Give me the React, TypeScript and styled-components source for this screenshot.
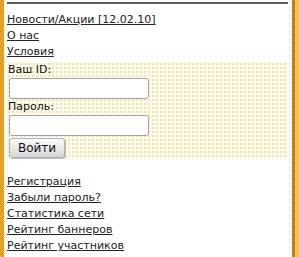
import React from 'react';
import styled, { createGlobalStyle } from 'styled-components';

const GlobalStyle = createGlobalStyle`
  html, body {
    margin: 0;
    padding: 0;
    background: #ffffff;
  }
  body {
    font-family: "DejaVu Sans", Verdana, sans-serif;
    font-size: 11px;
    color: #222;
  }
`;

const Frame = styled.div`
  display: flex;
  width: 299px;
  height: 257px;
  overflow: hidden;
`;

const Rail = styled.div<{ side: 'left' | 'right' }>`
  flex: none;
  width: ${({ side }) => (side === 'left' ? '4px' : '7px')};
  background-color: ${({ side }) => (side === 'left' ? '#f2a52a' : '#f6b93a')};
  background-image: ${({ side }) =>
    side === 'left'
      ? 'repeating-conic-gradient(#d48a14 0 25%, #f7b43c 0 50%)'
      : 'linear-gradient(90deg, transparent 0 3px, #f8c24a 3px), repeating-conic-gradient(#a8650c 0 25%, #e39a24 0 50%)'};
  background-size: ${({ side }) => (side === 'left' ? '2px 2px' : '100% 100%, 2px 2px')};
`;

const Content = styled.div`
  flex: 1;
  padding: 2px 4px 0 3px;
`;

const TopRule = styled.div`
  height: 2px;
  background: #5e5e5e;
`;

const LinkList = styled.div<{ top: number }>`
  display: flex;
  flex-direction: column;
  align-items: flex-start;
  padding-top: ${({ top }) => top}px;
  line-height: 16.2px;
`;

const NavLink = styled.a`
  color: #222;
  text-decoration: underline;
  white-space: nowrap;
`;

const LoginPanel = styled.form`
  margin: 1px 0 0;
  padding: 0 0 1px 1px;
  background-color: #fffdea;
  background-image: radial-gradient(circle, #e3d9a4 0.65px, transparent 0.85px);
  background-size: 4px 4px;
  display: flex;
  flex-direction: column;
  align-items: flex-start;
`;

const Label = styled.label`
  display: block;
  line-height: 16px;
  color: #111;
`;

const Field = styled.input`
  box-sizing: border-box;
  width: 140px;
  height: 21px;
  margin: 0 0 0 1px;
  border: 1px solid #a3a3a3;
  border-radius: 3px;
  background: #ffffff;
  font: inherit;
  padding: 0 3px;
  outline: none;
`;

const Button = styled.button`
  box-sizing: border-box;
  width: 56px;
  height: 20px;
  margin: 2px 0 0 1px;
  padding: 0;
  border: 1px solid #b0b0b0;
  border-radius: 3px;
  background: linear-gradient(#fbfbfb, #e6e6e6 60%, #d4d4d4);
  box-shadow: 1px 1px 0 #bdbdbd;
  font-family: "DejaVu Sans", Verdana, sans-serif;
  font-size: 12px;
  color: #111;
`;

export default function App() {
  const topLinks = ['Новости/Акции [12.02.10]', 'О нас', 'Условия'];
  const bottomLinks = [
    'Регистрация',
    'Забыли пароль?',
    'Статистика сети',
    'Рейтинг баннеров',
    'Рейтинг участников',
  ];

  return (
    <>
      <GlobalStyle />
      <Frame>
        <Rail side="left" />
        <Content>
          <TopRule />
          <LinkList top={8}>
            {topLinks.map((t) => (
              <NavLink key={t} href="#">{t}</NavLink>
            ))}
          </LinkList>
          <LoginPanel onSubmit={(e) => e.preventDefault()}>
            <Label>Ваш ID:</Label>
            <Field type="text" />
            <Label>Пароль:</Label>
            <Field type="password" />
            <Button type="submit">Войти</Button>
          </LoginPanel>
          <LinkList top={15}>
            {bottomLinks.map((t) => (
              <NavLink key={t} href="#">{t}</NavLink>
            ))}
          </LinkList>
        </Content>
        <Rail side="right" />
      </Frame>
    </>
  );
}
